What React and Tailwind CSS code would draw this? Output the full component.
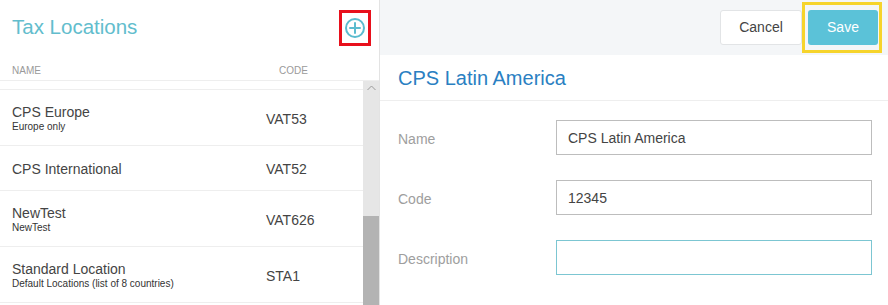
const LOCATIONS = [
  { name: "CPS Europe", sub: "Europe only", code: "VAT53" },
  { name: "CPS International", sub: null, code: "VAT52" },
  { name: "NewTest", sub: "NewTest", code: "VAT626" },
  { name: "Standard Location", sub: "Default Locations (list of 8 countries)", code: "STA1" },
];

const FIELDS = [
  { label: "Name", value: "CPS Latin America" },
  { label: "Code", value: "12345" },
  { label: "Description", value: "", focused: true },
];

function PlusCircle() {
  return (
    <svg width="22" height="22" viewBox="0 0 22 22" fill="none" stroke="#5bbccf" strokeWidth="2">
      <circle cx="11" cy="11" r="9" />
      <path d="M11 6v10M6 11h10" strokeLinecap="round" />
    </svg>
  );
}

function LocationList() {
  return (
    <div className="flex h-[305px] w-[380px] flex-col border-r border-[#e3e3e3] bg-white">
      <div className="flex h-[55px] items-center justify-between pl-3 pr-[8px]">
        <h1 className="text-[20.5px] font-normal text-[#62bdcd]">Tax Locations</h1>
        <div className="flex h-[36px] w-[32px] items-center justify-center border-[3px] border-[#e8101c]">
          <PlusCircle />
        </div>
      </div>
      <div className="flex h-[26px] items-start border-b border-[#eeeeee] pl-3 pt-[8px] text-[10px] uppercase text-[#9a9a9a]">
        <span className="w-[267px]">Name</span>
        <span>Code</span>
      </div>
      <div className="flex min-h-0 flex-1">
        <div className="flex-1 overflow-hidden">
          <div className="h-[9px] border-b border-[#eeeeee]" />
          {LOCATIONS.map((loc) => (
            <div
              key={loc.code}
              className="flex items-center border-b border-[#eeeeee] pb-[13px] pl-3 pt-[14px]"
            >
              <div className="w-[254px]">
                <div className="text-[14px] leading-[16px] text-[#444444]">{loc.name}</div>
                {loc.sub && (
                  <div className="translate-y-[1px] text-[10px] leading-[12px] text-[#333333]">
                    {loc.sub}
                  </div>
                )}
              </div>
              <div className="pt-[1px] text-[14px] leading-[16px] text-[#444444]">{loc.code}</div>
            </div>
          ))}
        </div>
        <div className="flex w-[16px] flex-col bg-[#e6e6e6]">
          <div className="flex h-[14px] items-center justify-center">
            <svg width="9" height="6" viewBox="0 0 9 6" fill="none" stroke="#9a9a9a" strokeWidth="1">
              <path d="M0.5 5L4.5 1L8.5 5" />
            </svg>
          </div>
          <div className="flex-1" />
          <div className="h-[89px] bg-[#b3b3b3]" />
        </div>
      </div>
    </div>
  );
}

function EditPanel() {
  return (
    <div className="flex h-[305px] flex-1 flex-col bg-white">
      <div className="flex h-[55px] items-center justify-end gap-[6px] bg-[#f4f6f8] pr-[10px]">
        <button
          type="button"
          className="h-[35px] w-[82px] rounded-[3px] border border-[#e2e4e6] bg-white text-[14px] text-[#444444]"
        >
          Cancel
        </button>
        <div className="relative">
          <button
            type="button"
            className="h-[35px] w-[70px] rounded-[3px] bg-[#5bc2d8] text-[14px] text-white"
          >
            Save
          </button>
          <div className="pointer-events-none absolute -bottom-[8px] -left-[6px] -right-[4px] -top-[8px] border-[3px] border-[#f6d42c]" />
        </div>
      </div>
      <div className="flex h-[46px] items-center border-b border-[#eeeeee] pl-[18px]">
        <h2 className="text-[20px] font-normal text-[#2a80c2]">CPS Latin America</h2>
      </div>
      <div className="flex flex-col gap-[25px] pl-[18px] pr-[16px] pt-[19px]">
        {FIELDS.map((f) => (
          <div key={f.label} className="flex items-center">
            <label className="mt-[3px] w-[158px] text-[14px] text-[#9e9e9e]">{f.label}</label>
            <input
              type="text"
              readOnly
              value={f.value}
              className={[
                "h-[35px] flex-1 border bg-white px-[11px] text-[14px] text-[#444444] outline-none",
                f.focused ? "border-[#7cc6d2]" : "border-[#bdbdbd]",
              ].join(" ")}
            />
          </div>
        ))}
      </div>
    </div>
  );
}

export default function App() {
  return (
    <div className="flex h-[305px] w-[888px] overflow-hidden bg-white font-['Liberation_Sans',Arial,sans-serif]">
      <LocationList />
      <EditPanel />
    </div>
  );
}
